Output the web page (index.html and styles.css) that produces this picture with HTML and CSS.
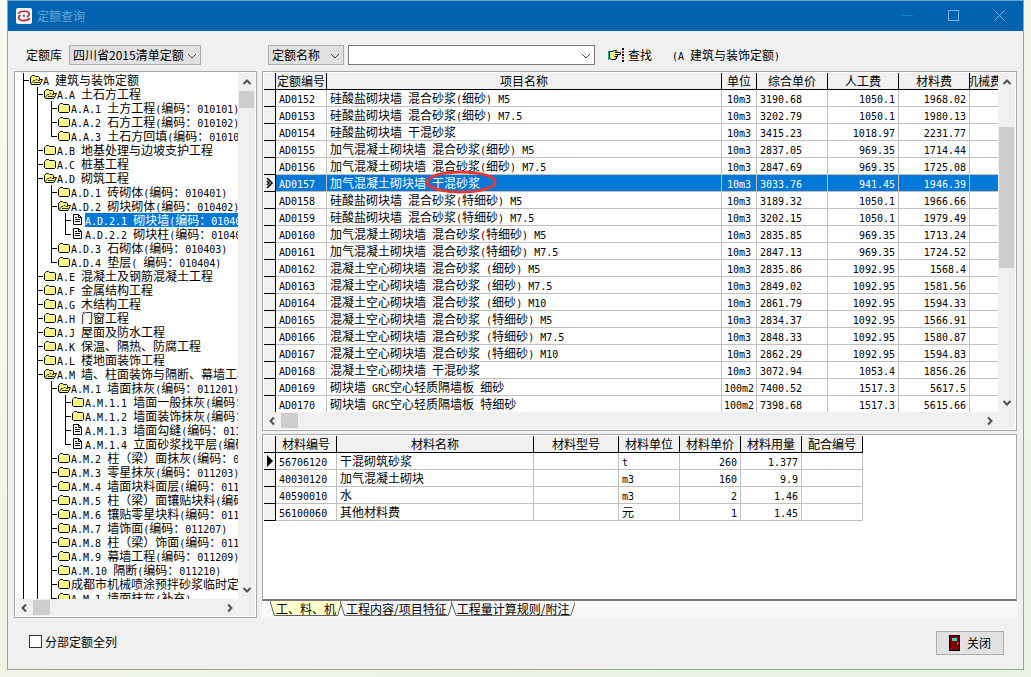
FILE: index.html
```html
<!DOCTYPE html>
<html lang="zh-CN">
<head>
<meta charset="utf-8">
<title>定额查询</title>
<link rel="stylesheet" href="styles.css">
</head>
<body>
<svg class="defs" aria-hidden="true">
  <symbol id="folder" viewBox="0 0 13 12"><path d="M.5 3.5 1.5 2.5 2.5 1.5H4.5L5.5 2.5H10.5L11.5 3.5V9.5L10.5 10.5H1.5L.5 9.5Z" fill="#fbf77c" stroke="#000"/><path d="M2 3.5H10" stroke="#ffffd8"/></symbol>
  <symbol id="open" viewBox="0 0 13 12"><path d="M.5 9V3.5L2.5 1.5H4.5L5.5 2.5H8.5L9.5 3.5V5.5H12.5L10 10.5H1.5Z" fill="#fbf77c" stroke="#000"/><path d="M1.5 9.5 3.5 6.5H5L6 5.5H7L8 6.500H10M4 8.5H10" fill="none" stroke="#333"/></symbol>
  <symbol id="doc" viewBox="0 0 13 12"><path d="M1.5.5H6.5L9.5 3.5V10.5H1.5Z" fill="#fff" stroke="#000"/><path d="M6.5.5V3.5H9.5M3 3.5H5M3 5.5H8M3 7.5H8" fill="none" stroke="#000"/></symbol>
  <symbol id="chev" viewBox="0 0 10 6"><path d="M1 1 5 5 9 1" fill="none" stroke="currentColor"/></symbol>
  <symbol id="arrow" viewBox="0 0 10 10"><path d="M1.5 3 5 6.5 8.5 3" fill="none" stroke="#505050" stroke-width="2"/></symbol>
</svg>
<main class="window">
  <header class="titlebar">
    <svg class="logo" width="16" height="16" viewBox="0 0 16 16"><rect width="16" height="16" rx="2" fill="#f6f4f4"/><path d="M2 5.500C4 3.500 8 3 11 3.500C14 4.500 14 7.500 11 9" fill="none" stroke="#b32b35" stroke-width="1.600"/><path d="M14 10.500C11 12.500 7 13 4.500 12C2 11 2 8.500 4.500 7" fill="none" stroke="#b32b35" stroke-width="1.600"/><circle cx="8" cy="7.800" r="1.200" fill="#667"/></svg>
    <h1>定额查询</h1>
    <button class="caption" aria-label="最小化"><svg width="12" height="12"><path d="M0 5.500H11" stroke="#2d7fc0"/></svg></button>
    <button class="caption" aria-label="最大化"><svg width="12" height="12"><rect x=".5" y=".5" width="10" height="10" fill="none" stroke="#7fb2dc"/></svg></button>
    <button class="caption" aria-label="关闭窗口"><svg width="12" height="12"><path d="M.5.5 10.500 10.500M10.500.5.5 10.500" stroke="#7fb2dc"/></svg></button>
  </header>

  <form class="toolbar">
    <div class="library">
      <label for="lib">定额库</label>
      <span class="drop lib"><select id="lib"><option>四川省2015清单定额</option></select><svg width="10" height="6"><use href="#chev"/></svg></span>
    </div>
    <span class="drop field"><select aria-label="查询字段"><option>定额名称</option></select><svg width="10" height="6"><use href="#chev"/></svg></span>
    <span class="drop keyword"><input type="text" aria-label="关键字"><svg width="10" height="6"><use href="#chev"/></svg></span>
    <button type="button" class="find">
      <svg width="17" height="14" viewBox="0 0 17 14"><path d="M.5 3V12" stroke="#00b8b8"/><path d="M1.500 3.500H4.500L6.500 2.500H8.500L7.500 4.500H12.500V6.500H9.500V8.500H8.500V10.500H7.500V11.500H3.500L1.500 10.500Z" fill="#ffff84" stroke="#000"/><path d="M7 6.500H10M6.500 8.500H9" stroke="#000"/><path d="M15 0V14" stroke="#000" stroke-width="2" stroke-dasharray="2 1"/><path d="M15 3V5M15 9V11" stroke="#e02020" stroke-width="2"/></svg>
      <span>查找</span>
    </button>
    <output class="scope"><span class="lat">(A </span>建筑与装饰定额<span class="lat">)</span></output>
  </form>

  <div class="body">
    <nav class="panel tree-panel" aria-label="定额分部">
      <ul class="tree" id="tree"></ul>
      <div class="vbar"><svg class="up"><use href="#arrow"/></svg><i class="thumb short"></i><svg class="down"><use href="#arrow"/></svg></div>
      <div class="hbar"><svg class="left"><use href="#arrow"/></svg><i class="thumb"></i><svg class="right"><use href="#arrow"/></svg></div>
    </nav>

    <div class="content">
      <section class="panel items">
        <div class="clip">
          <table>
            <colgroup><col class="c-mark"><col class="c-code"><col><col class="c-unit"><col class="c-price"><col class="c-price"><col class="c-price"><col class="c-cut"></colgroup>
            <thead><tr><th></th><th>定额编号</th><th>项目名称</th><th>单位</th><th>综合单价</th><th>人工费</th><th>材料费</th><th><span class="cut">机械费</span></th></tr></thead>
            <tbody id="items"></tbody>
          </table>
        </div>
        <div class="vbar"><svg class="up"><use href="#arrow"/></svg><i class="thumb long"></i><svg class="down"><use href="#arrow"/></svg></div>
        <div class="hbar"><svg class="left"><use href="#arrow"/></svg><i class="thumb"></i><svg class="right"><use href="#arrow"/></svg></div>
      </section>

      <section class="panel materials">
        <table>
          <colgroup><col class="c-mark"><col class="c-mid"><col class="c-name"><col class="c-model"><col class="c-mid"><col class="c-mid"><col class="c-mid"><col class="c-mid"></colgroup>
          <thead><tr><th></th><th>材料编号</th><th>材料名称</th><th>材料型号</th><th>材料单位</th><th>材料单价</th><th>材料用量</th><th>配合编号</th></tr></thead>
          <tbody id="materials"></tbody>
        </table>
      </section>

      <div class="tabs" role="tablist">
        <button role="tab" aria-selected="true"><svg viewBox="0 0 100 15" preserveAspectRatio="none"><path d="M0 0 6 14.500H94L100 0"/></svg><span>工、料、机</span></button>
        <button role="tab"><svg viewBox="0 0 100 15" preserveAspectRatio="none"><path d="M0 0 4 14.500H96L100 0"/></svg><span>工程内容/项目特征</span></button>
        <button role="tab"><svg viewBox="0 0 100 15" preserveAspectRatio="none"><path d="M0 0 4 14.500H96L100 0"/></svg><span>工程量计算规则/附注</span></button>
      </div>
    </div>
  </div>

  <footer class="footer">
    <label class="check"><input type="checkbox">分部定额全列</label>
    <button class="close">
      <svg width="11" height="16" viewBox="0 0 11 16"><rect x=".5" y=".5" width="10" height="15" fill="#800000" stroke="#000"/><rect x="3" y="3" width="5" height="3" fill="#3fd0c0"/><rect x="8" y="8" width="1" height="1" fill="#fff"/></svg>
      <span>关闭</span>
    </button>
  </footer>
</main>
<script src="app.js"></script>
</body>
</html>
```
FILE: styles.css
```css
* { box-sizing: border-box; }
html { height: 100%; }
body {
  height: 100%;
  margin: 0;
  padding: 0 7px 7px;
  background: linear-gradient(160deg, #fafbf4, #f1f5e8 50%, #e9f2e3);
  font: 12px/16px "Noto Sans CJK SC", sans-serif;
  color: #000;
}
button, input, select { font: inherit; color: inherit; border-radius: 0; margin: 0; }
button { border: 0; padding: 0; background: none; }
.defs { position: absolute; width: 0; height: 0; }
.lat { font-family: "DejaVu Sans Mono", monospace; font-size: 10px; line-height: 0; white-space: pre; }

.window {
  height: 100%;
  display: flex;
  flex-direction: column;
  border: 1px solid #9aa39a;
  border-top-color: #6ba3cf;
  background: #f0f0f0;
}
.titlebar {
  display: flex;
  align-items: center;
  height: 30px;
  padding-left: 8px;
  background: #0063b1;
}
.titlebar h1 { flex: 1; margin: 0 0 0 5px; font-size: 12px; font-weight: 400; color: #69a3d2; }
.caption { width: 46px; height: 30px; display: flex; align-items: center; justify-content: center; }

.toolbar { display: flex; align-items: center; height: 40px; padding: 8px 6px 0; }
.library { display: flex; align-items: center; gap: 7px; width: 254px; padding-left: 12px; }
.drop { position: relative; display: flex; }
.drop svg { position: absolute; right: 4px; top: 8px; color: #404040; pointer-events: none; }
.drop select, .drop input {
  appearance: none;
  width: 100%;
  height: 20px;
  padding: 0 3px;
  border: 1px solid #adadad;
  background: #e1e1e1;
  line-height: 18px;
}
.drop input { background: #fff; border-color: #7a7a7a; }
.lib { width: 132px; }
.field { width: 76px; }
.keyword { width: 247px; margin-left: 4px; }
.find { display: flex; align-items: center; gap: 3px; margin-left: 13px; }
.scope { margin-left: 20px; }

.body { flex: 1; min-height: 0; display: flex; gap: 5px; padding: 0 6px; }
.panel {
  display: grid;
  grid-template: minmax(0, 1fr) 17px / minmax(0, 1fr) 17px;
  overflow: hidden;
  padding: 1px;
  border: 1px solid #a8a8a8;
  background: #fff;
}
.tree-panel { width: 243px; }
.content { flex: 1; min-width: 0; display: flex; flex-direction: column; }

.vbar, .hbar { display: flex; background: #f0f0f0; }
.vbar { flex-direction: column; align-items: center; }
.hbar { grid-column: 1 / 3; align-items: center; padding-right: 17px; }
.vbar svg, .hbar svg { flex: none; width: 10px; height: 10px; margin: 4px 3px; }
.up { transform: rotate(180deg); }
.left { transform: rotate(90deg); }
.right { transform: rotate(-90deg); }
.vbar .down { margin-top: auto; }
.hbar .right { margin-left: auto; }
.thumb { background: #cdcdcd; width: 17px; height: 15px; }
.vbar .thumb { width: 15px; }
.hbar .thumb { margin-left: 1px; }
.short { height: 17px; }
.long { height: 141px; margin-top: 36px; }

.tree { margin: 0; padding: 0; list-style: none; overflow: hidden; }
.tree li { display: flex; height: 14px; padding-left: 7px; line-height: 14px; white-space: nowrap; }
.rail { flex: none; width: 14px; background: linear-gradient(#000, #000) 0 0 / 1px 100% no-repeat; }
.branch {
  width: 7px;
  background: linear-gradient(#000, #000) 0 0 / 1px 100% no-repeat, linear-gradient(#000, #000) 0 7px / 6px 1px no-repeat;
}
.branch.last { background-size: 1px 7px, 6px 1px; }
.tree svg { flex: none; width: 13px; height: 12px; margin-top: 1px; }
.tree .label { flex: none; }
.tree .selected { background: #0078d7; color: #fff; }

table { table-layout: fixed; width: 100%; border-spacing: 0; }
th, td { height: 17px; padding: 0; overflow: hidden; white-space: nowrap; line-height: 16px; font-weight: 400; }
th { border-right: 1px solid #000; border-bottom: 1px solid #000; background: #f0f0f0; }
td { padding: 0 3px; border-right: 1px solid #c0c0c0; border-bottom: 1px solid #c0c0c0; }
td:first-child { padding: 0; border-color: #000; background: #f0f0f0; }
td svg { display: block; margin: 0 auto; }
.num { text-align: right; }
.mid { text-align: center; padding: 0; }
.cut { display: flex; justify-content: center; }
.c-mark { width: 12px; }
.c-code { width: 51px; }
.c-unit { width: 35px; }
.c-price { width: 71px; }
.c-cut { width: 28px; }
.c-mid { width: 61px; }
.c-name { width: 197px; }
.c-model { width: 85px; }
.clip { overflow: hidden; }
.clip th:last-child, .clip td:last-child { border-right: 0; }
.current td:not(:first-child) { background: #0078d7; color: #fff; }
.marked { position: relative; }
td:has(.marked) { overflow: visible; }
.marked svg { position: absolute; left: -7px; top: -4px; }

.items { flex: 356 1 0; }
.materials { flex: 162 1 0; display: block; margin-top: 3px; border-bottom: 2px solid #777; }
.materials table { width: 599px; }

.tabs { display: flex; height: 17px; padding-left: 8px; background: #f8f8f8; }
.tabs button { position: relative; height: 15px; padding: 0 6px; line-height: 14px; margin-right: -2px; }
.tabs svg { position: absolute; left: 0; top: 0; width: 100%; height: 15px; }
.tabs path { fill: #f4f4f4; stroke: #606060; vector-effect: non-scaling-stroke; }
.tabs [aria-selected] path { fill: #ffffcc; }
.tabs span { position: relative; }

.footer { display: flex; align-items: center; justify-content: space-between; height: 51px; padding: 0 19px 2px 21px; }
.check { display: flex; align-items: center; gap: 3px; padding-bottom: 2px; }
.check input { appearance: none; width: 13px; height: 13px; border: 1px solid #333; background: #fff; }
.close {
  display: flex;
  align-items: center;
  justify-content: center;
  gap: 7px;
  width: 68px;
  height: 24px;
  border: 1px solid #adadad;
  background: #e1e1e1;
}
```
FILE: app.js
```js
// Wraps half-width runs so they use the fixed-pitch face.
const text = s => s.replace(/[\x20-\x7e]+/g, m => `<span class="lat">${m}</span>`);

// [level, icon, label, last child of its parent]
const nodes = [
  [0, "open", "A 建筑与装饰定额"],
  [1, "open", "A.A 土石方工程"],
  [2, "folder", "A.A.1 土方工程(编码：010101)"],
  [2, "folder", "A.A.2 石方工程(编码：010102)"],
  [2, "folder", "A.A.3 土石方回填(编码：01010", 1],
  [1, "folder", "A.B 地基处理与边坡支护工程"],
  [1, "folder", "A.C 桩基工程"],
  [1, "open", "A.D 砌筑工程"],
  [2, "folder", "A.D.1 砖砌体(编码：010401)"],
  [2, "open", "A.D.2 砌块砌体(编码：010402)"],
  [3, "doc", "A.D.2.1 砌块墙(编码：01040"],
  [3, "doc", "A.D.2.2 砌块柱(编码：01040", 1],
  [2, "folder", "A.D.3 石砌体(编码：010403)"],
  [2, "folder", "A.D.4 垫层( 编码：010404)", 1],
  [1, "folder", "A.E 混凝土及钢筋混凝土工程"],
  [1, "folder", "A.F 金属结构工程"],
  [1, "folder", "A.G 木结构工程"],
  [1, "folder", "A.H 门窗工程"],
  [1, "folder", "A.J 屋面及防水工程"],
  [1, "folder", "A.K 保温、隔热、防腐工程"],
  [1, "folder", "A.L 楼地面装饰工程"],
  [1, "open", "A.M 墙、柱面装饰与隔断、幕墙工程"],
  [2, "open", "A.M.1 墙面抹灰(编码：011201)"],
  [3, "folder", "A.M.1.1 墙面一般抹灰(编码："],
  [3, "folder", "A.M.1.2 墙面装饰抹灰(编码："],
  [3, "doc", "A.M.1.3 墙面勾缝(编码：011"],
  [3, "doc", "A.M.1.4 立面砂浆找平层(编码", 1],
  [2, "folder", "A.M.2 柱（梁）面抹灰(编码：0"],
  [2, "folder", "A.M.3 零星抹灰(编码：011203)"],
  [2, "folder", "A.M.4 墙面块料面层(编码：011"],
  [2, "folder", "A.M.5 柱（梁）面镶贴块料(编码"],
  [2, "folder", "A.M.6 镶贴零星块料(编码：011"],
  [2, "folder", "A.M.7 墙饰面(编码：011207)"],
  [2, "folder", "A.M.8 柱（梁）饰面(编码：011"],
  [2, "folder", "A.M.9 幕墙工程(编码：011209)"],
  [2, "folder", "A.M.10 隔断(编码：011210)"],
  [2, "folder", "成都市机械喷涂预拌砂浆临时定"],
  [2, "folder", "A.M.1 墙面抹灰(补充)", 1]
];
document.getElementById("tree").innerHTML = nodes.map(([level, icon, label, last], i) =>
  `<li>${'<span class="rail"></span>'.repeat(level)}<span class="rail branch${last ? " last" : ""}"></span>` +
  `<svg><use href="#${icon}"/></svg><span class="label${i === 10 ? " selected" : ""}">${text(label)}</span></li>`).join("");

const items = [
  ["AD0152", "硅酸盐砌块墙 混合砂浆(细砂) M5", "10m3", "3190.68", "1050.1", "1968.02"],
  ["AD0153", "硅酸盐砌块墙 混合砂浆(细砂) M7.5", "10m3", "3202.79", "1050.1", "1980.13"],
  ["AD0154", "硅酸盐砌块墙 干混砂浆", "10m3", "3415.23", "1018.97", "2231.77"],
  ["AD0155", "加气混凝土砌块墙 混合砂浆(细砂) M5", "10m3", "2837.05", "969.35", "1714.44"],
  ["AD0156", "加气混凝土砌块墙 混合砂浆(细砂) M7.5", "10m3", "2847.69", "969.35", "1725.08"],
  ["AD0157", "加气混凝土砌块墙 干混砂浆", "10m3", "3033.76", "941.45", "1946.39"],
  ["AD0158", "硅酸盐砌块墙 混合砂浆(特细砂) M5", "10m3", "3189.32", "1050.1", "1966.66"],
  ["AD0159", "硅酸盐砌块墙 混合砂浆(特细砂) M7.5", "10m3", "3202.15", "1050.1", "1979.49"],
  ["AD0160", "加气混凝土砌块墙 混合砂浆(特细砂) M5", "10m3", "2835.85", "969.35", "1713.24"],
  ["AD0161", "加气混凝土砌块墙 混合砂浆(特细砂) M7.5", "10m3", "2847.13", "969.35", "1724.52"],
  ["AD0162", "混凝土空心砌块墙 混合砂浆 (细砂) M5", "10m3", "2835.86", "1092.95", "1568.4"],
  ["AD0163", "混凝土空心砌块墙 混合砂浆 (细砂) M7.5", "10m3", "2849.02", "1092.95", "1581.56"],
  ["AD0164", "混凝土空心砌块墙 混合砂浆 (细砂) M10", "10m3", "2861.79", "1092.95", "1594.33"],
  ["AD0165", "混凝土空心砌块墙 混合砂浆 (特细砂) M5", "10m3", "2834.37", "1092.95", "1566.91"],
  ["AD0166", "混凝土空心砌块墙 混合砂浆 (特细砂) M7.5", "10m3", "2848.33", "1092.95", "1580.87"],
  ["AD0167", "混凝土空心砌块墙 混合砂浆 (特细砂) M10", "10m3", "2862.29", "1092.95", "1594.83"],
  ["AD0168", "混凝土空心砌块墙 干混砂浆", "10m3", "3072.94", "1053.4", "1856.26"],
  ["AD0169", "砌块墙 GRC空心轻质隔墙板 细砂", "100m2", "7400.52", "1517.3", "5617.5"],
  ["AD0170", "砌块墙 GRC空心轻质隔墙板 特细砂", "100m2", "7398.68", "1517.3", "5615.66"]
];
const cell = (s, cls = "") => `<td class="${cls}">${text(s)}</td>`;
const ring = '<svg width="72" height="24"><ellipse cx="36" cy="12" rx="34" ry="10" fill="none" stroke="#e03a3a" stroke-width="3"/></svg>';
const chevron = '<svg width="8" height="12"><path d="M1 1 6 6 1 11M1 4 3 6 1 8" fill="none" stroke="#000" stroke-width="1.500"/></svg>';
const pointer = '<svg width="8" height="12"><path d="M1 0 7 6 1 12Z"/></svg>';

document.getElementById("items").innerHTML = items.map((r, i) => {
  const current = i === 5;
  const name = current
    ? `<td>加气混凝土砌块墙<span class="lat"> </span><span class="marked">干混砂浆${ring}</span></td>`
    : cell(r[1]);
  return `<tr class="${current ? "current" : ""}"><td>${current ? chevron : ""}</td>${cell(r[0])}${name}` +
    `${cell(r[2], "mid")}${cell(r[3])}${cell(r[4], "num")}${cell(r[5], "num")}<td></td></tr>`;
}).join("");

const materials = [
  ["56706120", "干混砌筑砂浆", "t", "260", "1.377"],
  ["40030120", "加气混凝土砌块", "m3", "160", "9.9"],
  ["40590010", "水", "m3", "2", "1.46"],
  ["56100060", "其他材料费", "元", "1", "1.45"]
];
document.getElementById("materials").innerHTML = materials.map((r, i) =>
  `<tr><td>${i ? "" : pointer}</td>${cell(r[0])}${cell(r[1])}<td></td>${cell(r[2])}` +
  `${cell(r[3], "num")}${cell(r[4], "num")}<td></td></tr>`).join("");
```
